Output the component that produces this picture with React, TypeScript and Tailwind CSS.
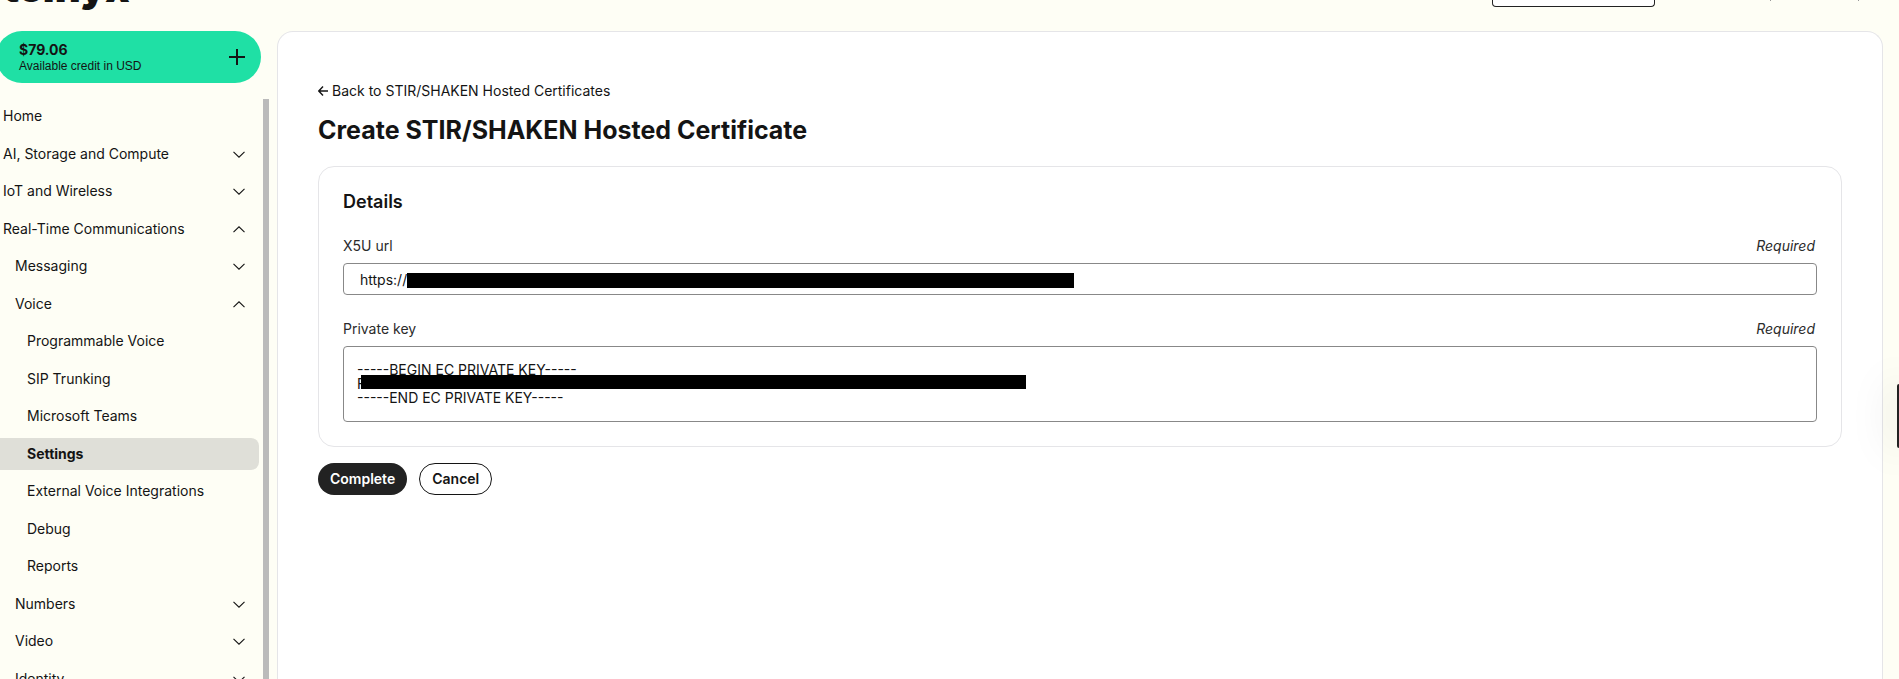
import { useState } from "react";

type NavItem = {
  label: string;
  level: 0 | 1 | 2;
  state?: "open" | "closed";
  active?: boolean;
};

const NAV: NavItem[] = [
  { label: "Home", level: 0 },
  { label: "AI, Storage and Compute", level: 0, state: "closed" },
  { label: "IoT and Wireless", level: 0, state: "closed" },
  { label: "Real-Time Communications", level: 0, state: "open" },
  { label: "Messaging", level: 1, state: "closed" },
  { label: "Voice", level: 1, state: "open" },
  { label: "Programmable Voice", level: 2 },
  { label: "SIP Trunking", level: 2 },
  { label: "Microsoft Teams", level: 2 },
  { label: "Settings", level: 2, active: true },
  { label: "External Voice Integrations", level: 2 },
  { label: "Debug", level: 2 },
  { label: "Reports", level: 2 },
  { label: "Numbers", level: 1, state: "closed" },
  { label: "Video", level: 1, state: "closed" },
  { label: "Identity", level: 1, state: "closed" },
];

const INDENT = { 0: "pl-[3px]", 1: "pl-[15px]", 2: "pl-[27px]" };

export default function App() {
  return (
    <div className="relative flex h-screen flex-col overflow-hidden bg-[#fefef5] font-[Inter,sans-serif] text-sm text-[#141414]">
      <Header />
      <div className="flex min-h-0 flex-1">
        <Sidebar />
        <main className="mx-4 min-w-0 flex-1 rounded-t-2xl border border-b-0 border-[#e5e5e8] bg-white px-10 pt-[49px]">
          <CertificateForm />
        </main>
      </div>
      {/* edge tab */}
      <div className="absolute top-[384px] right-0 h-16 w-[2px] rounded-l bg-[#222] shadow-[0_0_40px_4px_rgba(0,0,0,0.15)]" />
    </div>
  );
}

function Header() {
  return (
    <header className="flex h-[31px] shrink-0 items-start overflow-hidden">
      <div className="flex h-px items-end pl-[3px] text-[40px] leading-[26px] font-black">
        telnyx
      </div>
      <div className="ml-auto h-[7px] w-[163px] rounded-b border border-t-0 border-[#222] bg-white" />
      <span className="ml-[115px] size-px bg-[#999]" />
      <span className="mr-10 ml-[87px] size-px bg-[#999]" />
    </header>
  );
}

function Sidebar() {
  return (
    <aside className="flex w-[261px] shrink-0 flex-col">
      <button className="-ml-1 flex h-[52px] shrink-0 items-center justify-between rounded-[26px] bg-[#1fe0a5] pt-px pr-[15px] pl-[23px] text-left">
        <span className="flex flex-col">
          <span className="text-sm leading-4 font-bold">$79.06</span>
          <span className="font-['Liberation_Sans',sans-serif] text-xs leading-4">
            Available credit in USD
          </span>
        </span>
        <svg width="18" height="18" viewBox="0 0 18 18" stroke="currentColor" strokeWidth="2">
          <path d="M9 0v16M1 8h16" />
        </svg>
      </button>
      <nav className="mt-4 -mr-2 min-h-0 flex-1 overflow-hidden border-r-6 border-[#bbb] pt-px">
        <ul className="pr-1">
          {NAV.map((item) => (
            <li key={item.label} className="mb-[5px] odd:mb-[6px]">
              <a
                href="#"
                aria-current={item.active ? "page" : undefined}
                className={`flex h-8 items-center justify-between pr-[14px] ${INDENT[item.level]} ${
                  item.active ? "rounded-r-lg bg-[#dfdfd8] font-bold" : ""
                }`}
              >
                {item.label}
                {item.state && <Chevron open={item.state === "open"} />}
              </a>
            </li>
          ))}
        </ul>
      </nav>
    </aside>
  );
}

function Chevron({ open }: { open: boolean }) {
  return (
    <svg width="12" height="7" viewBox="0 0 12 7" fill="none" stroke="currentColor" strokeWidth="1.1">
      <path d={open ? "M0.5 6.2L6 0.8l5.5 5.4" : "M0.5 0.8L6 6.2l5.5-5.4"} />
    </svg>
  );
}

function CertificateForm() {
  const [url, setUrl] = useState("https://");
  const [key, setKey] = useState(
    "-----BEGIN EC PRIVATE KEY-----\nF\n-----END EC PRIVATE KEY-----",
  );

  return (
    <form onSubmit={(e) => e.preventDefault()}>
      <a href="#" className="flex items-center gap-1 leading-5">
        <svg width="10" height="10" viewBox="0 0 10 10" fill="none" stroke="currentColor" strokeWidth="1.4">
          <path d="M5 0.5L0.8 5 5 9.5M0.8 5H10" />
        </svg>
        Back to STIR/SHAKEN Hosted Certificates
      </a>
      <h1 className="mt-[13px] text-[25px] leading-8 font-bold">
        Create STIR/SHAKEN Hosted Certificate
      </h1>

      <section className="mt-5 rounded-2xl border border-[#e5e5e8] px-6 pt-[25px] pb-6">
        <h2 className="text-lg leading-5 font-semibold">Details</h2>
        <FieldLabel id="x5u" text="X5U url" />
        <div className="relative mt-[7px]">
          <input
            id="x5u"
            value={url}
            onChange={(e) => setUrl(e.target.value)}
            className="block h-8 w-full rounded border border-[#888] bg-white px-4"
          />
          <span className="absolute top-[10px] left-16 h-[15px] w-[667px] bg-black" />
        </div>
        <FieldLabel id="key" text="Private key" />
        <div className="relative mt-[7px]">
          <textarea
            id="key"
            value={key}
            onChange={(e) => setKey(e.target.value)}
            className="block h-[76px] w-full resize-none overflow-hidden rounded border border-[#888] bg-white px-[13px] py-4 leading-[14px]"
          />
          <span className="absolute top-[29px] left-[18px] h-[14px] w-[665px] bg-black" />
        </div>
      </section>

      <div className="mt-4 flex gap-3">
        <button type="submit" className="h-8 rounded-full bg-[#222] px-3 font-semibold text-white">
          Complete
        </button>
        <button type="button" className="h-8 rounded-full border border-[#141414] px-3 font-semibold">
          Cancel
        </button>
      </div>
    </form>
  );
}

function FieldLabel({ id, text }: { id: string; text: string }) {
  return (
    <div className="mt-6 flex justify-between pr-[2px] leading-5 text-[#2b2b2b]">
      <label htmlFor={id}>{text}</label>
      <em>Required</em>
    </div>
  );
}
